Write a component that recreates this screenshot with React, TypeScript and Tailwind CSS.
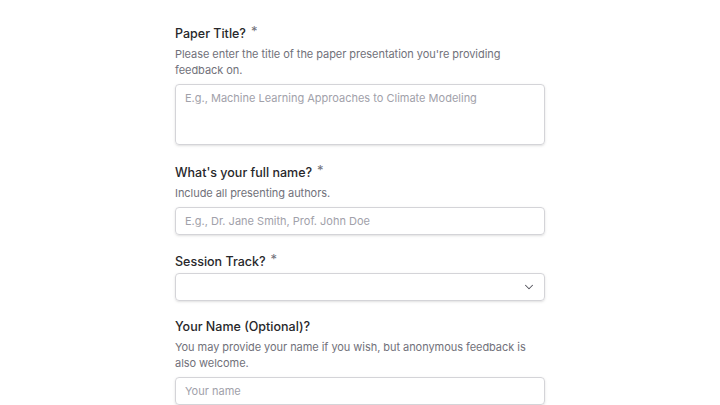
import { ChevronDown } from "lucide-react";

function Label({ text, required }: { text: string; required?: boolean }) {
  return (
    <div className="text-[12.5px] leading-5 font-medium text-[#27272a]">
      {text}
      {required && <span className="ml-[5px] align-[2px] text-[13px] font-normal text-[#71717a]">*</span>}
    </div>
  );
}

function Hint({ children }: { children: React.ReactNode }) {
  return <p className="mt-[2px] text-[11px] leading-4 tracking-[-0.05px] text-[#71717a]">{children}</p>;
}

export default function App() {
  return (
    <div className="min-h-screen bg-white font-['Inter',sans-serif]">
      <div className="mx-auto w-[370px] pt-[21px] flex flex-col gap-[14px]">
        {/* Paper title */}
        <div className="mb-[1px]">
          <Label text="Paper Title?" required />
          <Hint>Please enter the title of the paper presentation you're providing feedback on.</Hint>
          <textarea
            className="mt-[6px] block w-full h-[61px] resize-none rounded border border-[#d4d4d8] px-[9px] py-[5px] text-[11px] leading-4 placeholder:text-[#a1a1aa] shadow-sm outline-none"
            placeholder="E.g., Machine Learning Approaches to Climate Modeling"
          />
        </div>

        {/* Full name */}
        <div>
          <Label text="What's your full name?" required />
          <Hint>Include all presenting authors.</Hint>
          <input
            className="mt-[6px] block w-full h-[28px] rounded border border-[#d4d4d8] px-[9px] text-[11px] placeholder:text-[#a1a1aa] shadow-sm outline-none"
            placeholder="E.g., Dr. Jane Smith, Prof. John Doe"
          />
        </div>

        {/* Session track */}
        <div>
          <Label text="Session Track?" required />
          <div className="mt-[1px] flex h-[28px] w-full items-center justify-end rounded border border-[#d4d4d8] px-[8px] shadow-sm">
            <ChevronDown size={14} strokeWidth={1.75} className="text-[#52525b]" />
          </div>
        </div>

        {/* Optional name */}
        <div className="mt-[2px]">
          <Label text="Your Name (Optional)?" />
          <Hint>You may provide your name if you wish, but anonymous feedback is also welcome.</Hint>
          <input
            className="mt-[6px] block w-full h-[28px] rounded border border-[#d4d4d8] px-[9px] text-[11px] placeholder:text-[#a1a1aa] shadow-sm outline-none"
            placeholder="Your name"
          />
        </div>
      </div>
    </div>
  );
}
